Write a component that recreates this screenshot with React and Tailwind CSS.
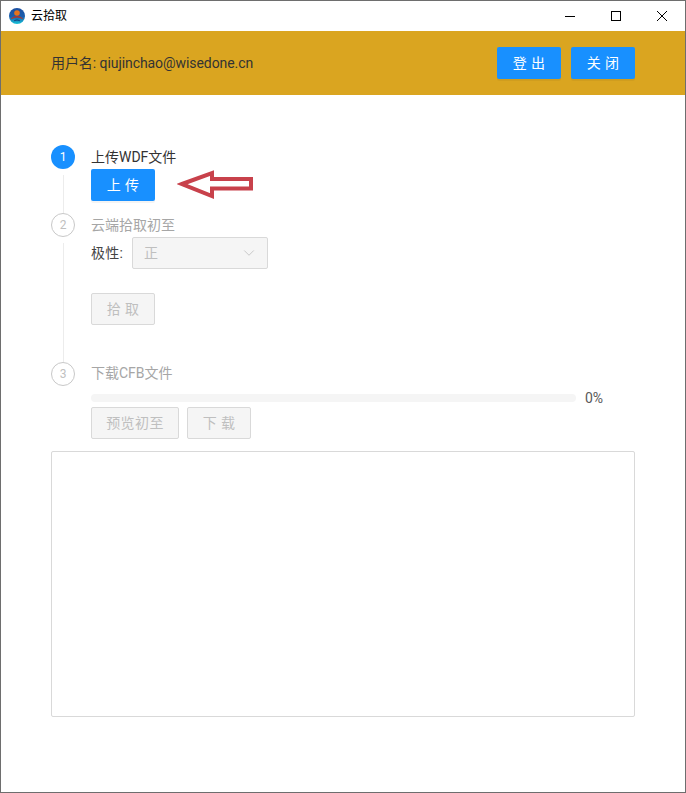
import { ChevronDown } from "lucide-react";

const font = "font-['Roboto','Noto_Sans_CJK_SC',sans-serif]";

function Button({ children, className = "" }) {
  return (
    <button
      type="button"
      className={`h-8 rounded-[2px] bg-[#1890ff] text-sm tracking-[0.4px] text-white shadow-[0_2px_0_rgba(0,0,0,0.045)] ${className}`}
    >
      {children}
    </button>
  );
}

function DisabledButton({ children, className = "" }) {
  return (
    <button
      type="button"
      className={`h-8 rounded-[2px] border border-[#d9d9d9] bg-[#f5f5f5] text-sm tracking-[0.4px] text-[#bfbfbf] ${className}`}
    >
      {children}
    </button>
  );
}

function StepCircle({ n, active }) {
  return (
    <div
      className={
        active
          ? "flex size-6 shrink-0 items-center justify-center rounded-full bg-[#1890ff] text-xs text-white"
          : "flex size-6 shrink-0 items-center justify-center rounded-full border border-[#c8c8c8] text-xs text-[#bfbfbf]"
      }
    >
      {n}
    </div>
  );
}

function Step({ n, active, tail, children, className = "" }) {
  return (
    <div className={`flex gap-4 ${className}`}>
      <div className="flex w-6 shrink-0 flex-col items-center">
        <StepCircle n={n} active={active} />
        {tail && <div className="mt-1.5 w-px flex-1 bg-[#ececec]" />}
      </div>
      <div className="min-w-0 flex-1">{children}</div>
    </div>
  );
}

function Logo() {
  return (
    <svg width="16" height="16" viewBox="0 0 16 16">
      <defs>
        <linearGradient id="logo-bg" x1="0" y1="0" x2="0" y2="1">
          <stop offset="0" stopColor="#1c4fa0" />
          <stop offset="0.55" stopColor="#1a5fae" />
          <stop offset="1" stopColor="#16c4d8" />
        </linearGradient>
      </defs>
      <circle cx="8" cy="8" r="8" fill="url(#logo-bg)" />
      <circle cx="8" cy="5" r="2.8" fill="#e8731c" />
      <path d="M2 10.4 Q8 5.6 14 10.4 L14 11.2 Q8 7.8 2 11.2 Z" fill="#b3362a" />
      <path d="M5 12.4 Q8 10.4 11 12.4 L11 13.2 Q8 11.6 5 13.2 Z" fill="#123a7a" />
    </svg>
  );
}

function TitleBar() {
  return (
    <div className="flex h-[30px] items-center bg-white">
      <div className="ml-2 flex items-center gap-1.5">
        <Logo />
        <span className="text-xs text-black">云拾取</span>
      </div>
      <div className="ml-auto flex h-full items-center">
        <div className="flex h-full w-[46px] items-center justify-center">
          <div className="h-px w-[10px] bg-black" />
        </div>
        <div className="flex h-full w-[46px] items-center justify-center">
          <div className="size-[10px] border border-black" />
        </div>
        <div className="flex h-full w-[46px] items-center justify-center">
          <svg width="10" height="10" viewBox="0 0 10 10" stroke="#000" strokeWidth="1">
            <path d="M0 0 L10 10 M10 0 L0 10" />
          </svg>
        </div>
      </div>
    </div>
  );
}

function Header() {
  return (
    <div className="flex h-16 items-center justify-between bg-[#daa520] px-[50px]">
      <span className="text-sm tracking-[-0.07px] text-[#333]">用户名: qiujinchao@wisedone.cn</span>
      <div className="flex gap-[10px]">
        <Button className="w-16">登 出</Button>
        <Button className="w-16">关 闭</Button>
      </div>
    </div>
  );
}

export default function App() {
  return (
    <div className={`relative flex h-[793px] w-[686px] flex-col border border-[#6e6e6e] bg-white ${font}`}>
      <TitleBar />
      <Header />
      <div className="flex flex-1 flex-col px-[50px] pt-[50px]">
        <Step n={1} active tail className="h-[68px]">
          <div className="flex h-6 items-center text-sm text-[#333]">上传WDF文件</div>
          <Button className="w-16">上 传</Button>
        </Step>
        <Step n={2} tail className="h-[149px]">
          <div className="flex h-6 items-center text-sm text-[#a6a6a6]">云端拾取初至</div>
          <div className="flex h-8 items-center">
            <span className="w-[41px] text-sm tracking-[0.3px] text-[#444]">极性:</span>
            <div className="flex h-8 w-[136px] items-center justify-between rounded-[2px] border border-[#d9d9d9] bg-[#f5f5f5] pl-[11px] pr-[9px] text-sm text-[#bfbfbf]">
              <span>正</span>
              <ChevronDown className="size-[18px] text-[#bfbfbf]" strokeWidth={1.1} />
            </div>
          </div>
          <DisabledButton className="mt-6 w-16">拾 取</DisabledButton>
        </Step>
        <Step n={3} className="h-[90px]">
          <div className="-mt-px flex h-6 items-center text-sm text-[#a6a6a6]">下载CFB文件</div>
          <div className="mt-[9px] flex h-[8px] items-center gap-[9px]">
            <div className="h-2 w-[485px] rounded-full bg-[#f5f5f5]" />
            <span className="text-sm text-[#595959]">0%</span>
          </div>
          <div className="mt-[5px] flex gap-2">
            <DisabledButton className="w-[88px]">预览初至</DisabledButton>
            <DisabledButton className="w-16">下 载</DisabledButton>
          </div>
        </Step>
        <div className="mt-[-1px] h-[266px] w-[584px] rounded-[2px] border border-[#d9d9d9]" />
      </div>
      <svg
        className="absolute left-[176px] top-[168px]"
        width="78"
        height="32"
        viewBox="0 0 78 32"
        fill="none"
        stroke="#c8414b"
        strokeWidth="4"
      >
        <path d="M5 15 L35 4 L35 10 L74 10 L74 19.5 L35 19.5 L35 27 Z" />
      </svg>
    </div>
  );
}
